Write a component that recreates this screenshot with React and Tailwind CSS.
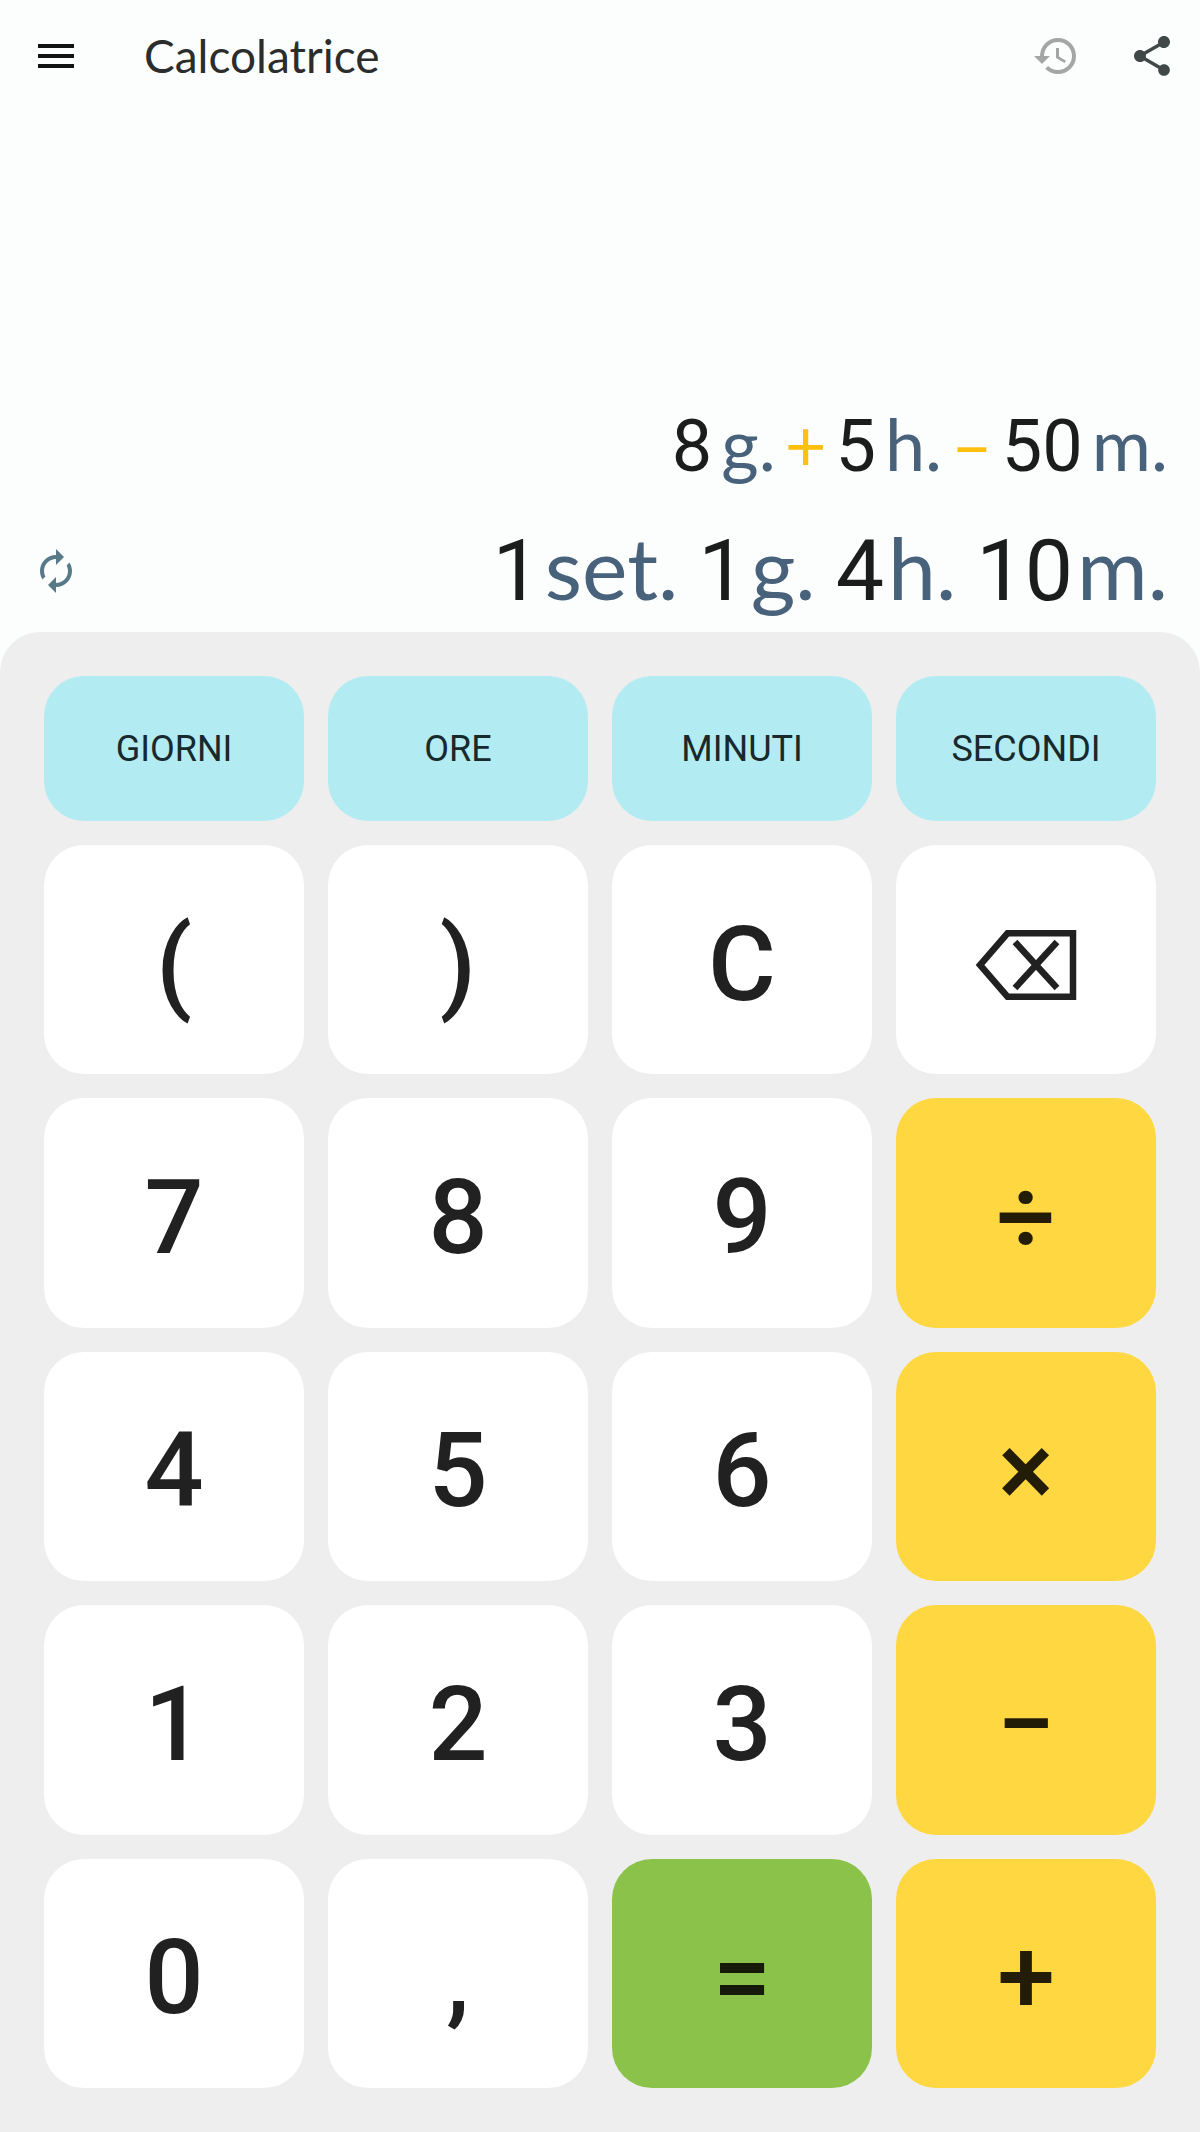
import React from 'react';
import { MdAutorenew, MdHistory, MdMenu, MdShare } from 'react-icons/md';

const expression = [
  { type: 'number', text: '8' },
  { type: 'unit', text: 'g.' },
  { type: 'operator', text: '+' },
  { type: 'number', text: '5' },
  { type: 'unit', text: 'h.' },
  { type: 'operator', text: '–' },
  { type: 'number', text: '50' },
  { type: 'unit', text: 'm.' },
];

const result = [
  { value: '1', unit: 'set.' },
  { value: '1', unit: 'g.' },
  { value: '4', unit: 'h.' },
  { value: '10', unit: 'm.' },
];

const units = ['GIORNI', 'ORE', 'MINUTI', 'SECONDI'];

const keys = [
  '(', ')', 'C', '⌫',
  '7', '8', '9', '÷',
  '4', '5', '6', '×',
  '1', '2', '3', '−',
  '0', ',', '=', '+',
];

const tokenStyles = {
  number: 'text-[#1b1c1c]',
  unit: "font-['Lato'] leading-none text-[#48627c]",
  operator: "font-['Lato'] leading-none text-[#ffbf0f]",
};

const getKeyStyle = (key) => {
  if (key === '=') return 'bg-[#8bc34a] font-medium text-[#151a0a]';
  if ('÷×−+'.includes(key)) return 'bg-[#ffd740] font-medium text-[#231d08]';
  return 'bg-white font-[480] text-[#212121]';
};

const BackspaceIcon = () => (
  <svg width="102" height="70" viewBox="0 0 102 70" fill="none" stroke="currentColor" strokeWidth="6.5">
    <path d="M32.5 3.25H98V66.75H32.5L5 35Z" />
    <path d="M40 12L82 58M82 12L40 58" />
  </svg>
);

const Header = () => (
  <header className="flex h-28 items-center pl-8 pr-6">
    <button aria-label="Menu" className="text-[#111212]">
      <MdMenu size={48} />
    </button>
    <h1 className="ml-16 flex-1 font-['Lato'] text-[46px] leading-none text-[#2b2d2d]">Calcolatrice</h1>
    <div className="flex gap-12">
      <button aria-label="Cronologia" className="text-[#a4a6a5]">
        <MdHistory size={48} />
      </button>
      <button aria-label="Condividi" className="text-[#414948]">
        <MdShare size={48} />
      </button>
    </div>
  </header>
);

const Display = () => (
  <section className="flex flex-col gap-6 px-8 pt-[285px] pb-[11px]">
    <p className="flex items-baseline justify-end gap-[9px] text-[72px] leading-[100px]">
      {expression.map((token, idx) => (
        <span key={idx} className={tokenStyles[token.type]}>
          {token.text}
        </span>
      ))}
    </p>
    <div className="flex items-center justify-between">
      <button aria-label="Cambia formato" className="text-[#587a88]">
        <MdAutorenew size={48} />
      </button>
      <p className="flex items-baseline gap-5 text-[86px] leading-[100px]">
        {result.map((part, idx) => (
          <span key={idx} className="flex items-baseline gap-1">
            <span className={tokenStyles.number}>{part.value}</span>
            <span className={tokenStyles.unit}>{part.unit}</span>
          </span>
        ))}
      </p>
    </div>
  </section>
);

const Keypad = () => (
  <section className="flex flex-1 flex-col gap-6 rounded-t-[40px] bg-[#eeeeee] p-11">
    <div className="grid grid-cols-4 gap-6">
      {units.map((unit) => (
        <button
          key={unit}
          className="h-[145px] rounded-[40px] bg-[#b2ebf2] text-[36px] text-[#17292c]"
        >
          {unit}
        </button>
      ))}
    </div>
    <div className="grid flex-1 auto-rows-fr grid-cols-4 gap-6">
      {keys.map((key) => (
        <button
          key={key}
          aria-label={key === '⌫' ? 'Cancella' : undefined}
          className={`flex items-center justify-center rounded-[40px] pt-2.5 text-[104px] leading-none ${getKeyStyle(key)}`}
        >
          {key === '⌫' ? <BackspaceIcon /> : key}
        </button>
      ))}
    </div>
  </section>
);

const App = () => {
  return (
    <main className="flex min-h-screen flex-col bg-[#fcfefd] font-['Roboto',sans-serif]">
      <Header />
      <Display />
      <Keypad />
    </main>
  );
};

export default App;
